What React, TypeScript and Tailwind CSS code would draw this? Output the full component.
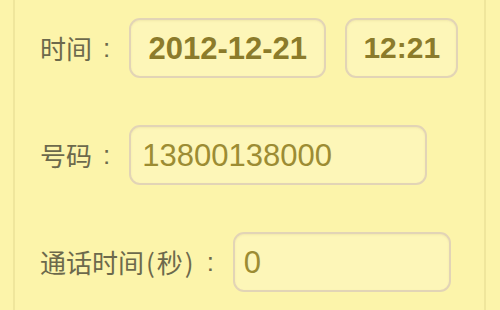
import React from 'react';

const label = 'text-[26px] leading-none text-[#6c694c] whitespace-nowrap';
const colon = 'ml-[11px] mr-[19px] text-[26px] leading-none text-[#6c694c]';
const box =
  'h-[60px] rounded-[11px] border-2 border-[#e2d4b6] bg-[#fdf6b8] shadow-[inset_0_1px_2px_rgba(180,160,100,0.15)] flex items-center';
const cjk = { fontFamily: '"Noto Sans CJK SC", sans-serif' };

export default function App() {
  return (
    <div
      className="w-[500px] h-[310px] overflow-hidden bg-[#fcf4aa] pl-[13px]"
      style={{ fontFamily: '"Liberation Sans", Arial, "Noto Sans CJK SC", sans-serif' }}
    >
      <div className="w-[473px] h-full border-x-2 border-[#efe69c] pl-[25px] pt-[18px] flex flex-col gap-[47px]">
        {/* 时间 */}
        <div className="flex items-center h-[60px]">
          <span className={label} style={cjk}>时间</span>
          <span className={colon}>:</span>
          <div className={`${box} w-[197px] justify-center`}>
            <span className="text-[31px] font-bold text-[#8b7b2b] leading-none">2012-12-21</span>
          </div>
          <div className={`${box} ml-[19px] w-[113px] justify-center`}>
            <span className="text-[30px] font-bold text-[#8b7b2b] leading-none">12:21</span>
          </div>
        </div>

        {/* 号码 */}
        <div className="flex items-center h-[60px]">
          <span className={label} style={cjk}>号码</span>
          <span className={colon}>:</span>
          <div className={`${box} w-[298px] pl-[11px]`}>
            <span className="text-[31px] text-[#9c8c33] leading-none">13800138000</span>
          </div>
        </div>

        {/* 通话时间 */}
        <div className="flex items-center h-[60px]">
          <span className={label} style={cjk}>
            通话时间<span className="px-[2px]">(</span>秒<span className="px-[2px]">)</span>
          </span>
          <span className={colon}>:</span>
          <div className={`${box} w-[218px] pl-[9px]`}>
            <span className="text-[31px] text-[#9c8c33] leading-none">0</span>
          </div>
        </div>
      </div>
    </div>
  );
}
